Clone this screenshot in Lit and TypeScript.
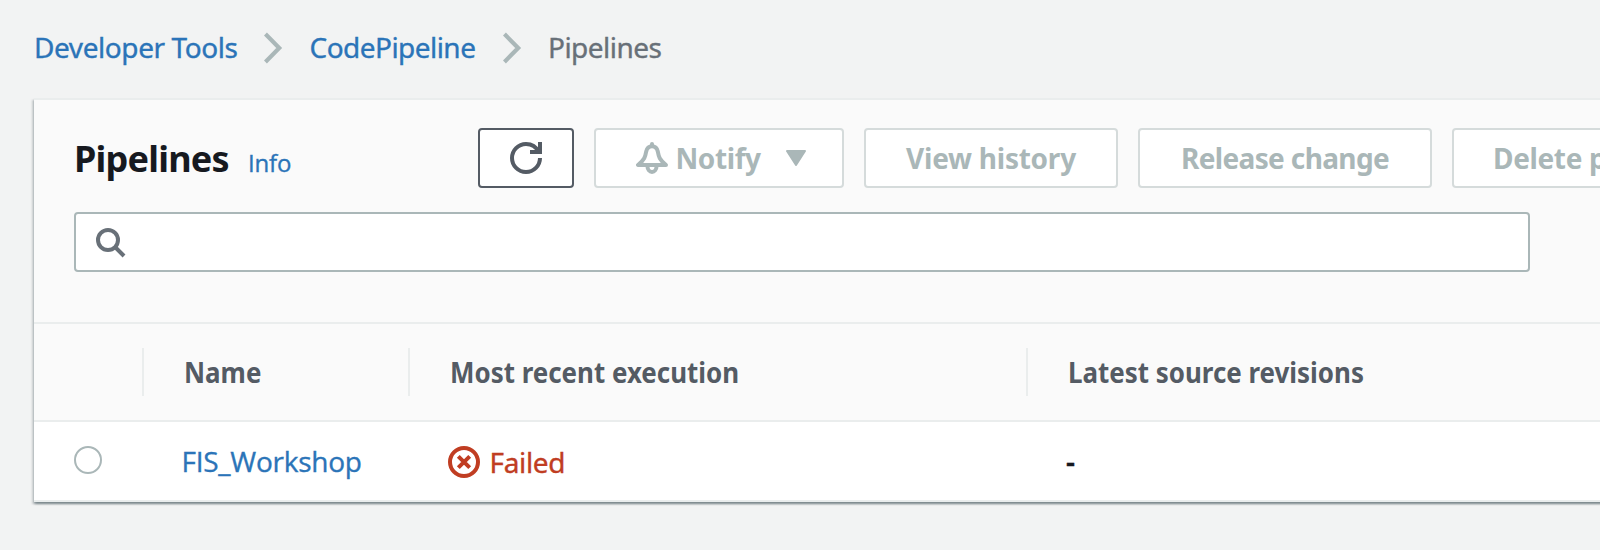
import { LitElement, html, css } from "lit";
import { customElement } from "lit/decorators.js";

const chevron = html`<svg class="chevron" width="20" height="32" viewBox="0 0 20 32"><path d="M1.400 2 15.200 16 1.400 30" fill="none" stroke="#aab7b8" stroke-width="4.200"/></svg>`;

const refresh = html`<svg width="32" height="32" viewBox="0 0 16 16" fill="none" stroke="currentColor" stroke-width="2">
  <path d="M15 8c0 3.87-3.13 7-7 7s-7-3.13-7-7 3.13-7 7-7c2.79 0 5.2 1.63 6.33 4"/><path d="M15 0v5h-5"/></svg>`;

const bell = html`<svg width="32" height="32" viewBox="0 0 32 32" fill="none" stroke="currentColor" stroke-width="4" stroke-linejoin="round">
  <path d="M16 4.200C12.700 4.200 10.900 6.200 10.200 9.500C9.200 15 8.800 17.500 2 23H30C23.200 17.500 22.800 15 21.800 9.500C21.100 6.200 19.300 4.200 16 4.200Z"/>
  <path d="M16 2v2" stroke-linecap="round"/><path d="M11.500 24.500a4.500 5.400 0 0 0 9 0"/></svg>`;

const search = html`<svg width="30" height="30" viewBox="0 0 30 30" fill="none" stroke="#687078" stroke-width="4">
  <circle cx="12" cy="12" r="10"/><path d="M19 19 28 28"/></svg>`;

const failed = html`<svg width="32" height="32" viewBox="0 0 32 32" fill="none" stroke="currentColor" stroke-width="4">
  <circle cx="16" cy="16" r="14"/><path d="M10.300 10.300 21.700 21.700M21.700 10.300 10.300 21.700"/></svg>`;

@customElement("app-root")
export class AppRoot extends LitElement {
  static styles = css`
    :host { display: block; height: 550px; overflow: hidden; background: #f2f3f3; color: #16191f;
      font: 400 28px/44px "Noto Sans", sans-serif; white-space: nowrap; }
    * { box-sizing: border-box; }
    svg { display: block; flex: none; }
    a { color: #2b74b8; text-decoration: none; }
    .crumbs, .info, .item { -webkit-text-stroke: .35px currentColor; }
    .crumbs { display: flex; align-items: center; height: 98px; padding: 0 0 4px 34px; color: #687078; letter-spacing: -.52px; }
    .crumbs .first { width: 229.500px; letter-spacing: -.42px; }
    .crumbs .second { width: 193px; letter-spacing: -.54px; }
    .chevron { margin-top: 2px; }
    .crumbs .first + .chevron { margin-right: 26px; }
    .crumbs .second + .chevron { margin-right: 25.500px; }
    .panel { width: 1740px; margin-left: 34px; border-top: 2px solid #eaeded; background: #fff;
      box-shadow: 0 2px 2px 0 rgba(0,28,36,.3), 2px 2px 2px 0 rgba(0,28,36,.15), -2px 2px 2px 0 rgba(0,28,36,.15); }
    .top { height: 222px; padding: 28px 0 0 40px; background: #fafafa; }
    .bar { display: flex; height: 60px; }
    .title { flex: none; width: 404px; display: flex; align-items: baseline; padding-top: 1px; }
    h1 { margin: 0; width: 174px; font-size: 36px; line-height: 60px; letter-spacing: -.78px; }
    .info { font-family: "Open Sans", sans-serif; font-size: 24px; letter-spacing: -.15px; }
    .buttons { display: flex; flex: none; gap: 20px; }
    .btn { display: flex; flex: none; align-items: center; justify-content: center; height: 60px; border: 2px solid #d5dbdb;
      border-radius: 4px; background: #fff; color: #aab7b8; font-weight: 700; letter-spacing: -.4px; padding-bottom: 1px; }
    .btn.refresh { width: 96px; border-color: #545b64; color: #545b64; padding: 0; }
    .btn.notify { width: 250px; justify-content: flex-start; padding: 0 0 0 40px; }
    .notify .label { width: 110.500px; margin-left: 7.500px; padding-bottom: 1px; }
    .btn.history { width: 254px; letter-spacing: -.25px; }
    .btn.release { width: 294px; letter-spacing: -.64px; }
    .btn.delete { width: 310px; justify-content: flex-start; padding-left: 39px; letter-spacing: -.35px; }
    .search { width: 1456px; height: 60px; margin-top: 24px; padding: 14px 20px; border: 2px solid #aab7b8; border-radius: 4px; background: #fff; }
    .row { display: grid; grid-template-columns: 108px 266px 618px 1fr; }
    .head { height: 100px; padding: 24px 0; background: #fafafa; border: solid #eaeded; border-width: 2px 0; color: #545b64; font-weight: 700; }
    .head div + div { border-left: 2px solid #eaeded; padding-left: 39.500px; line-height: 48px; height: 48px; }
    .head span { display: inline-block; transform: scaleX(.926); transform-origin: 0 50%; }
    .item { height: 80px; border-bottom: 2px solid #eaeded; line-height: 79px; }
    .item .name { padding-left: 39.500px; letter-spacing: -.26px; font-family: "Open Sans", sans-serif; }
    .item .exec { display: flex; align-items: center; height: 80px; padding-left: 40px; color: #c03d22; letter-spacing: -.35px; gap: 9.500px; }
    .item .rev { padding-left: 40px; font-weight: 600; }
    .radio { width: 28px; height: 28px; margin: 24px 0 0 40px; border: 2px solid #aab7b8; border-radius: 50%; }
  `;

  render() {
    return html`
      <nav class="crumbs">
        <a class="first">Developer Tools</a>${chevron}
        <a class="second">CodePipeline</a>${chevron}
        <span>Pipelines</span>
      </nav>
      <section class="panel">
        <div class="top">
          <div class="bar">
            <div class="title"><h1>Pipelines</h1><a class="info">Info</a></div>
            <div class="buttons">
              <div class="btn refresh">${refresh}</div>
              <div class="btn notify">${bell}<span class="label">Notify</span>
                <svg width="20" height="16" viewBox="0 0 20 16"><path d="M1 1H19L10 15Z" fill="currentColor" stroke="currentColor" stroke-width="2" stroke-linejoin="round"/></svg>
              </div>
              <div class="btn history">View history</div>
              <div class="btn release">Release change</div>
              <div class="btn delete">Delete pipeline</div>
            </div>
          </div>
          <div class="search">${search}</div>
        </div>
        <div class="row head">
          <div></div>
          <div><span>Name</span></div>
          <div><span>Most recent execution</span></div>
          <div><span>Latest source revisions</span></div>
        </div>
        <div class="row item">
          <div><div class="radio"></div></div>
          <div class="name"><a>FIS_Workshop</a></div>
          <div class="exec">${failed}<span>Failed</span></div>
          <div class="rev">-</div>
        </div>
      </section>`;
  }
}
